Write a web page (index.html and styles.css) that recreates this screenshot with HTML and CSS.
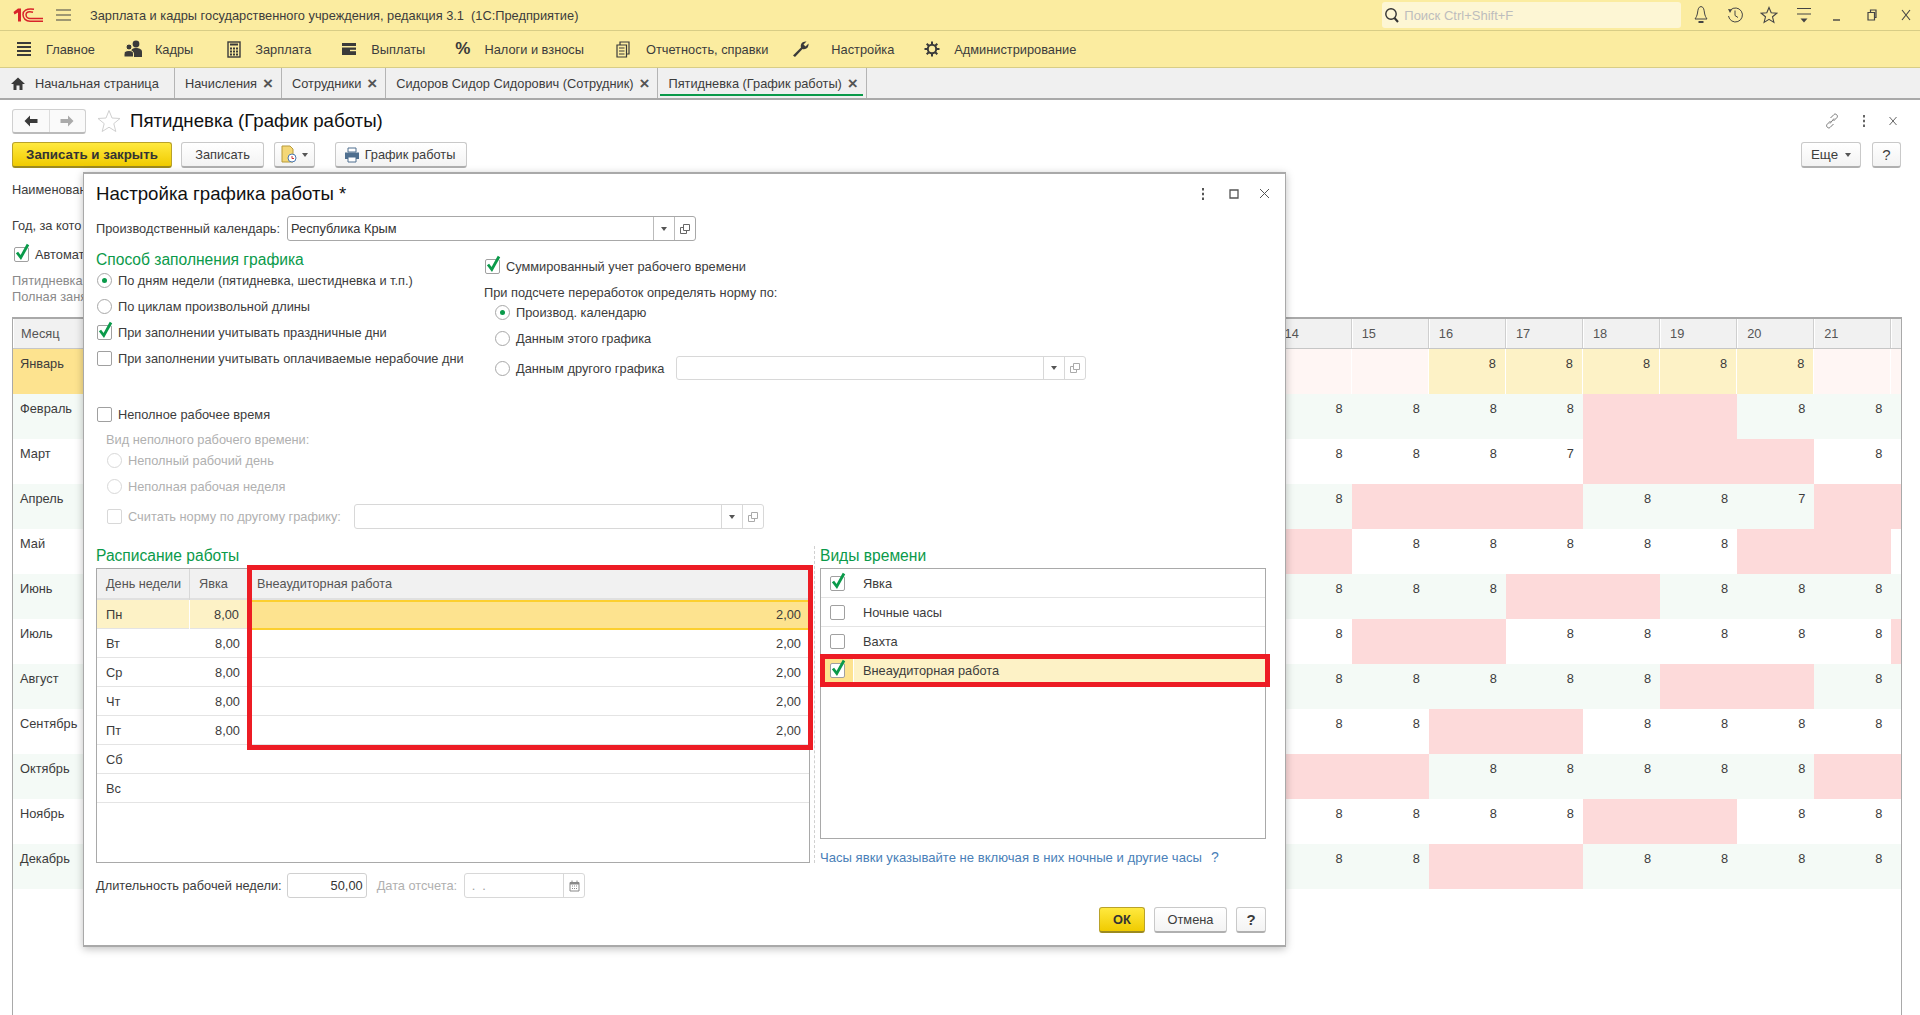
FILE: index.html
```html
<!DOCTYPE html>
<html lang="ru">
<head>
  <meta charset="UTF-8" />
  <title>Пятидневка (График работы)</title>
  <link rel="stylesheet" href="styles.css">
</head>
<body>

  <!-- shared icons -->
  <svg class="sprite" width="0" height="0">
    <symbol id="tick" viewBox="0 0 16 18"><path d="M3 9.5 L6.8 14.5 L14 1.5" fill="none" stroke="#0a9a4a" stroke-width="2.8"/></symbol>
    <symbol id="open" viewBox="0 0 12 12"><path d="M4.5 1.5h6v6h-6z M4.5 4.5h-3v6h6v-3" fill="none" stroke="currentColor"/></symbol>
  </svg>

  <header class="titlebar">
    <svg class="logo" width="30" height="14" viewBox="0 0 30 14">
      <path d="M0.500 4 L5 0.500 H8 V13.500 H5 V4.500 L1.500 6.500Z" fill="#d8232a"/>
      <path d="M21 1.200 C13 0 10 3 10 6.500 C10 10.500 13 13.200 17 13.200 H30" fill="none" stroke="#d8232a" stroke-width="1.500"/>
      <path d="M20 4.200 C16 3 13 4 13 6.500 C13 9 15 10.500 17 10.500 H30" fill="none" stroke="#d8232a" stroke-width="1.500"/>
    </svg>
    <svg class="burger" width="15" height="12" viewBox="0 0 15 12"><path d="M0 1h15M0 6h15M0 11h15" stroke="#444" stroke-width="1.2"/></svg>
    <div class="app-title">Зарплата и кадры государственного учреждения, редакция 3.1&nbsp; (1С:Предприятие)</div>
    <div class="search">
      <svg width="16" height="18" viewBox="0 0 16 18"><circle cx="7" cy="8" r="5.2" fill="none" stroke="#333" stroke-width="1.4"/><path d="M10.5 12 L14 16" stroke="#333" stroke-width="2"/></svg>
      <span>Поиск Ctrl+Shift+F</span>
    </div>
    <div class="win-icons">
      <svg width="16" height="20" viewBox="0 0 16 20"><path d="M8 1.5 C5 2 5 5 4.5 8 C4 11 3 12.5 2 14 H14 C13 12.5 12 11 11.5 8 C11 5 11 2 8 1.5Z" fill="none" stroke="#444"/><path d="M5.5 17h5" stroke="#444" stroke-width="2"/></svg>
      <svg width="18" height="18" viewBox="0 0 18 18"><path d="M4.5 4 A7 7 0 1 1 2.5 10" fill="none" stroke="#444"/><path d="M2 3 L6 3.5 L4 7Z" fill="#444"/><path d="M9 4.5 V9.5 L12 11.5" fill="none" stroke="#444"/></svg>
      <svg width="18" height="18" viewBox="0 0 18 18"><path d="M9 1.5 L11.2 6.8 L16.8 7.2 L12.5 10.8 L13.9 16.4 L9 13.4 L4.1 16.4 L5.5 10.8 L1.2 7.2 L6.8 6.8Z" fill="none" stroke="#444" stroke-width="1.1"/></svg>
      <svg width="14" height="16" viewBox="0 0 14 16"><path d="M0 1.5h14M0 7h14" stroke="#444" stroke-width="1.2"/><path d="M3.5 11.5h7L7 15.5Z" fill="#444"/></svg>
      <svg width="12" height="12" viewBox="0 0 12 12"><path d="M1 11h7" stroke="#444" stroke-width="1.4"/></svg>
      <svg width="12" height="12" viewBox="0 0 12 12"><path d="M2 3.5h6.5v7.5H2z M4.5 3.5V1h5.5v7.5H8.5" fill="none" stroke="#444" stroke-width="1.2"/></svg>
      <svg width="12" height="14" viewBox="0 0 12 14"><path d="M2 2 L10 12 M10 2 L2 12" stroke="#444" stroke-width="1.1"/></svg>
    </div>
  </header>

  <nav class="menubar">
    <div class="menu-item"><svg width="16" height="16" viewBox="0 0 16 16"><path d="M1 2h14M1 6h14M1 10h14M1 14h14" stroke="#3a3a3a" stroke-width="2"/></svg>Главное</div>
    <div class="menu-item"><svg width="20" height="18" viewBox="0 0 20 18"><circle cx="13" cy="4" r="3.4" fill="#3a3a3a"/><path d="M8 17 V12 C8 9 10 8 13 8 C16 8 19 9 19 12 V17Z" fill="#3a3a3a"/><circle cx="6" cy="7" r="3" fill="#3a3a3a" stroke="#fbeca0"/><path d="M1 17 V14 C1 11.500 3 10.500 6 10.500 C9 10.500 10.500 11.500 10.500 14 V17Z" fill="#3a3a3a" stroke="#fbeca0"/></svg>Кадры</div>
    <div class="menu-item"><svg width="14" height="17" viewBox="0 0 14 17"><rect x="1" y="1" width="12" height="15" fill="none" stroke="#3a3a3a" stroke-width="1.4"/><path d="M3 3.500h8" stroke="#3a3a3a" stroke-width="2"/><path d="M3 7.500h2M6 7.500h2M9 7.500h2M3 10.500h2M6 10.500h2M9 10.500h2M3 13.500h2M6 13.500h2M9 13.500h2" stroke="#3a3a3a" stroke-width="1.8"/></svg>Зарплата</div>
    <div class="menu-item"><svg width="16" height="14" viewBox="0 0 16 14"><path d="M1 1h14v3H1z" fill="#3a3a3a"/><path d="M1 5.500h14V13H1z" fill="#3a3a3a"/><path d="M9 8.500h6" stroke="#fbeca0" stroke-width="1.400"/></svg>Выплаты</div>
    <div class="menu-item"><span class="percent">%</span>Налоги и взносы</div>
    <div class="menu-item"><svg width="14" height="17" viewBox="0 0 14 17"><path d="M1 4h9.500v12H1z M4 4V1h9v12h-2.500" fill="none" stroke="#3a3a3a" stroke-width="1.200"/><path d="M3 7h5.500M3 10h5.500M3 13h5.500" stroke="#3a3a3a"/></svg>Отчетность, справки</div>
    <div class="menu-item"><svg width="18" height="18" viewBox="0 0 18 18"><path d="M1 15.500 L9 7.500 C8 4 10.500 1 14.500 1.500 L11.500 4.500 L13.500 6.500 L16.500 3.500 C17 7.500 14 10 10.500 9 L3 17Z" fill="#3a3a3a"/></svg>Настройка</div>
    <div class="menu-item"><svg width="16" height="16" viewBox="0 0 16 16"><circle cx="8" cy="8" r="4.200" fill="none" stroke="#3a3a3a" stroke-width="2"/><path d="M8 0.500v3M8 12.500v3M0.500 8h3M12.500 8h3M2.700 2.700l2.100 2.100M11.200 11.200l2.100 2.100M2.700 13.300l2.100-2.100M11.200 4.800l2.100-2.100" stroke="#3a3a3a" stroke-width="2"/></svg>Администрирование</div>
  </nav>

  <div class="tabbar">
    <div class="tab tab-home"><svg width="14" height="13" viewBox="0 0 14 13"><path d="M7 0.500 L14 7 H11.500 V13 H8.500 V8.500 H5.500 V13 H2.500 V7 H0Z" fill="#3a3a3a"/></svg>Начальная страница</div>
    <div class="tab">Начисления<span class="tab-x">×</span></div>
    <div class="tab">Сотрудники<span class="tab-x">×</span></div>
    <div class="tab">Сидоров Сидор Сидорович (Сотрудник)<span class="tab-x">×</span></div>
    <div class="tab tab-active">Пятидневка (График работы)<span class="tab-x">×</span></div>
  </div>

  <main class="form">
    <div class="form-head">
      <div class="nav-group">
        <span class="nav-btn"><svg width="14" height="12" viewBox="0 0 14 12"><path d="M0.500 6 L6 0.500 V4 H13.500 V8 H6 V11.500Z" fill="#3a3a3a"/></svg></span>
        <span class="nav-btn"><svg width="14" height="12" viewBox="0 0 14 12"><path d="M13.500 6 L8 0.500 V4 H0.500 V8 H8 V11.500Z" fill="#aaa"/></svg></span>
      </div>
      <svg class="fav" width="24" height="24" viewBox="0 0 24 24"><path d="M12 1.500 L15 9 L23 9.500 L16.800 14.600 L18.800 22.500 L12 18.200 L5.200 22.500 L7.200 14.600 L1 9.500 L9 9Z" fill="none" stroke="#d0d0d0"/></svg>
      <h1 class="form-title">Пятидневка (График работы)</h1>
      <div class="head-icons">
        <svg width="16" height="18" viewBox="0 0 16 18"><path d="M6.500 6 L10 2.500 C11.500 1 14.500 3.500 13 5.500 L9.500 9 M9.500 12 L6 15.500 C4.500 17 1.500 14.500 3 12.500 L6.500 9 M6 11.500 L10 6.500" fill="none" stroke="#777"/></svg>
        <svg width="4" height="14" viewBox="0 0 4 14"><path d="M2 1v2.500M2 5.700v2.500M2 10.500v2.500" stroke="#666" stroke-width="2"/></svg>
        <svg width="10" height="10" viewBox="0 0 10 10"><path d="M1.500 1 L8.500 9 M8.500 1 L1.500 9" stroke="#666"/></svg>
      </div>
    </div>

    <div class="form-bar">
      <button class="btn btn-default btn-save">Записать и закрыть</button>
      <button class="btn btn-write">Записать</button>
      <button class="btn btn-split">
        <svg width="16" height="19" viewBox="0 0 16 19"><path d="M1 1h8l3 3v13H1z" fill="#f4d777" stroke="#b79a3a"/><circle cx="11" cy="13" r="4" fill="#fff" stroke="#4a78b0"/><path d="M11 11v2.500h2" stroke="#c33" fill="none"/></svg>
        <i class="caret"></i>
      </button>
      <button class="btn btn-print">
        <svg width="16" height="16" viewBox="0 0 16 16"><path d="M4 1h8v4H4z" fill="#fff" stroke="#4f6f8f"/><path d="M1 5.500h14V12H1z" fill="#4f6f8f"/><path d="M4 10h8v5H4z" fill="#fff" stroke="#4f6f8f"/></svg>
        График работы
      </button>
      <div class="bar-right">
        <button class="btn btn-more">Еще<i class="caret"></i></button>
        <button class="btn btn-help">?</button>
      </div>
    </div>

    <div class="field f-name">Наименован</div>
    <div class="field f-year">Год, за кото</div>
    <div class="field f-auto"><span class="check is-on"><svg><use href="#tick"/></svg></span>Автомат</div>
    <div class="note">Пятидневка</div>
    <div class="note">Полная заня</div>

    <section class="calendar">
      <div class="cal-row cal-head"><div class="cell month">Месяц</div><div class="gap"></div><div class="cell">14</div><div class="cell">15</div><div class="cell">16</div><div class="cell">17</div><div class="cell">18</div><div class="cell">19</div><div class="cell">20</div><div class="cell">21</div><div class="cell">22</div></div>
      <div class="cal-row cal-sel"><div class="cell month">Январь</div><div class="gap"></div><div class="cell rest"></div><div class="cell rest"></div><div class="cell">8</div><div class="cell">8</div><div class="cell">8</div><div class="cell">8</div><div class="cell">8</div><div class="cell rest"></div><div class="cell rest"></div></div>
      <div class="cal-row even"><div class="cell month">Февраль</div><div class="gap"></div><div class="cell">8</div><div class="cell">8</div><div class="cell">8</div><div class="cell">8</div><div class="cell off"></div><div class="cell off"></div><div class="cell">8</div><div class="cell">8</div><div class="cell"></div></div>
      <div class="cal-row"><div class="cell month">Март</div><div class="gap"></div><div class="cell">8</div><div class="cell">8</div><div class="cell">8</div><div class="cell">7</div><div class="cell off"></div><div class="cell off"></div><div class="cell off"></div><div class="cell">8</div><div class="cell"></div></div>
      <div class="cal-row even"><div class="cell month">Апрель</div><div class="gap"></div><div class="cell">8</div><div class="cell off"></div><div class="cell off"></div><div class="cell off"></div><div class="cell">8</div><div class="cell">8</div><div class="cell">7</div><div class="cell off"></div><div class="cell off"></div></div>
      <div class="cal-row"><div class="cell month">Май</div><div class="gap"></div><div class="cell off"></div><div class="cell">8</div><div class="cell">8</div><div class="cell">8</div><div class="cell">8</div><div class="cell">8</div><div class="cell off"></div><div class="cell off"></div><div class="cell"></div></div>
      <div class="cal-row even"><div class="cell month">Июнь</div><div class="gap"></div><div class="cell">8</div><div class="cell">8</div><div class="cell">8</div><div class="cell off"></div><div class="cell off"></div><div class="cell">8</div><div class="cell">8</div><div class="cell">8</div><div class="cell"></div></div>
      <div class="cal-row"><div class="cell month">Июль</div><div class="gap"></div><div class="cell">8</div><div class="cell off"></div><div class="cell off"></div><div class="cell">8</div><div class="cell">8</div><div class="cell">8</div><div class="cell">8</div><div class="cell">8</div><div class="cell off"></div></div>
      <div class="cal-row even"><div class="cell month">Август</div><div class="gap"></div><div class="cell">8</div><div class="cell">8</div><div class="cell">8</div><div class="cell">8</div><div class="cell">8</div><div class="cell off"></div><div class="cell off"></div><div class="cell">8</div><div class="cell"></div></div>
      <div class="cal-row"><div class="cell month">Сентябрь</div><div class="gap"></div><div class="cell">8</div><div class="cell">8</div><div class="cell off"></div><div class="cell off"></div><div class="cell">8</div><div class="cell">8</div><div class="cell">8</div><div class="cell">8</div><div class="cell"></div></div>
      <div class="cal-row even"><div class="cell month">Октябрь</div><div class="gap"></div><div class="cell off"></div><div class="cell off"></div><div class="cell">8</div><div class="cell">8</div><div class="cell">8</div><div class="cell">8</div><div class="cell">8</div><div class="cell off"></div><div class="cell off"></div></div>
      <div class="cal-row"><div class="cell month">Ноябрь</div><div class="gap"></div><div class="cell">8</div><div class="cell">8</div><div class="cell">8</div><div class="cell">8</div><div class="cell off"></div><div class="cell off"></div><div class="cell">8</div><div class="cell">8</div><div class="cell"></div></div>
      <div class="cal-row even"><div class="cell month">Декабрь</div><div class="gap"></div><div class="cell">8</div><div class="cell">8</div><div class="cell off"></div><div class="cell off"></div><div class="cell">8</div><div class="cell">8</div><div class="cell">8</div><div class="cell">8</div><div class="cell"></div></div>
    </section>
  </main>

  <!-- Modal window -->
  <div class="dialog">
    <div class="dlg-head">
      <div class="dlg-title">Настройка графика работы *</div>
      <div class="dlg-icons">
        <svg width="4" height="14" viewBox="0 0 4 14"><path d="M2 1v2.500M2 5.700v2.500M2 10.500v2.500" stroke="#555" stroke-width="2"/></svg>
        <svg width="10" height="10" viewBox="0 0 10 10"><path d="M1 1h8v8H1z" fill="none" stroke="#555" stroke-width="1.300"/></svg>
        <svg width="11" height="11" viewBox="0 0 11 11"><path d="M1 1 L10 10 M10 1 L1 10" stroke="#555"/></svg>
      </div>
    </div>

    <div class="cal-field">
      <label>Производственный календарь:</label>
      <div class="input input-cal"><span class="input-text">Республика Крым</span><span class="input-btn"><i class="caret"></i></span><span class="input-btn"><svg width="12" height="12"><use href="#open"/></svg></span></div>
    </div>

    <div class="fill-block">
      <div class="fill-left">
        <h2 class="group-title">Способ заполнения графика</h2>
        <div class="opt"><span class="radio is-on"></span>По дням недели (пятидневка, шестидневка и т.п.)</div>
        <div class="opt"><span class="radio"></span>По циклам произвольной длины</div>
        <div class="opt"><span class="check is-on"><svg><use href="#tick"/></svg></span>При заполнении учитывать праздничные дни</div>
        <div class="opt"><span class="check"></span>При заполнении учитывать оплачиваемые нерабочие дни</div>
      </div>
      <div class="fill-right">
        <div class="opt"><span class="check is-on"><svg><use href="#tick"/></svg></span>Суммированный учет рабочего времени</div>
        <div class="norm-label">При подсчете переработок определять норму по:</div>
        <div class="opt opt-norm1"><span class="radio is-on"></span>Производ. календарю</div>
        <div class="opt opt-norm2"><span class="radio"></span>Данным этого графика</div>
        <div class="opt opt-norm3"><span class="radio"></span>Данным другого графика
          <div class="input input-other is-dim"><span class="input-text"></span><span class="input-btn"><i class="caret"></i></span><span class="input-btn"><svg width="12" height="12"><use href="#open"/></svg></span></div>
        </div>
      </div>
    </div>

    <div class="part-block">
      <div class="opt"><span class="check"></span>Неполное рабочее время</div>
      <div class="part-sub">
        <div class="part-label">Вид неполного рабочего времени:</div>
        <div class="opt opt-part1"><span class="radio"></span>Неполный рабочий день</div>
        <div class="opt opt-part2"><span class="radio"></span>Неполная рабочая неделя</div>
        <div class="opt opt-part3"><span class="check"></span>Считать норму по другому графику:
          <div class="input input-norm is-dim"><span class="input-text"></span><span class="input-btn"><i class="caret"></i></span><span class="input-btn"><svg width="12" height="12"><use href="#open"/></svg></span></div>
        </div>
      </div>
    </div>

    <div class="tables">
      <div class="sched">
        <h2 class="group-title">Расписание работы</h2>
        <div class="sched-table">
          <div class="sched-row sched-head"><div>День недели</div><div>Явка</div><div>Внеаудиторная работа</div></div>
          <div class="sched-row is-sel"><div>Пн</div><div class="num">8,00</div><div class="num">2,00</div></div>
          <div class="sched-row"><div>Вт</div><div class="num">8,00</div><div class="num">2,00</div></div>
          <div class="sched-row"><div>Ср</div><div class="num">8,00</div><div class="num">2,00</div></div>
          <div class="sched-row"><div>Чт</div><div class="num">8,00</div><div class="num">2,00</div></div>
          <div class="sched-row"><div>Пт</div><div class="num">8,00</div><div class="num">2,00</div></div>
          <div class="sched-row"><div>Сб</div><div class="num"></div><div class="num"></div></div>
          <div class="sched-row"><div>Вс</div><div class="num"></div><div class="num"></div></div>
        </div>
        <div class="red-box red-sched"></div>
      </div>
      <div class="kinds">
        <h2 class="group-title">Виды времени</h2>
        <div class="kinds-table">
          <div class="kind-row"><div class="kind-check"><span class="check is-on"><svg><use href="#tick"/></svg></span></div><div>Явка</div></div>
          <div class="kind-row"><div class="kind-check"><span class="check"></span></div><div>Ночные часы</div></div>
          <div class="kind-row"><div class="kind-check"><span class="check"></span></div><div>Вахта</div></div>
          <div class="kind-row is-sel"><div class="kind-check"><span class="check is-on"><svg><use href="#tick"/></svg></span></div><div>Внеаудиторная работа</div></div>
        </div>
        <div class="red-box red-kinds"></div>
        <div class="kinds-hint">Часы явки указывайте не включая в них ночные и другие часы<span class="hint-q">?</span></div>
      </div>
    </div>

    <div class="week-row">
      <label>Длительность рабочей недели:</label>
      <div class="input input-week"><span class="input-text num">50,00</span></div>
      <label class="is-off">Дата отсчета:</label>
      <div class="input input-date is-dim"><span class="input-text">&nbsp;. &nbsp;.</span><span class="input-btn"><svg width="11" height="12" viewBox="0 0 11 12"><path d="M1 2.500h9V11H1z" fill="none" stroke="#888"/><path d="M1 3.500h9" stroke="#888" stroke-width="2"/><path d="M3 0.500v2M8 0.500v2M3 6h1M5 6h1M7 6h1M3 8.500h1M5 8.500h1M7 8.500h1" stroke="#888"/></svg></span></div>
    </div>

    <div class="dlg-buttons">
      <button class="btn btn-default btn-ok">ОК</button>
      <button class="btn btn-cancel">Отмена</button>
      <button class="btn btn-help">?</button>
    </div>
  </div>

</body>
</html>
```

FILE: styles.css
```css
:root {
  --yellow: #fbeca0;
  --yellow-line: #d8cd86;
  --sel-light: #fdf2c6;
  --sel-strong: #fde38f;
  --sel-line: #fccf2e;
  --green-title: #0a9a4a;
  --line: #a9a9a9;
  --row-line: #e4e4e4;
  --text: #3c3c3c;
}

* {
  box-sizing: border-box;
}

html, body {
  height: 100%;
}

body {
  margin: 0;
  position: relative;
  overflow: hidden;
  background: #fff;
  color: var(--text);
  font-family: "Liberation Sans", Arial, sans-serif;
  font-size: 12.8px;
}

.sprite {
  position: absolute;
}

svg {
  display: block;
  flex: none;
}

/* top bars */
.titlebar {
  height: 31px;
  display: flex;
  align-items: center;
  padding-left: 13px;
  background: var(--yellow);
  border-bottom: 1px solid var(--yellow-line);
}

.burger {
  margin-left: 13px;
}

.app-title {
  margin-left: 19px;
  width: 1273px;
}

.search {
  width: 299px;
  height: 26px;
  margin-left: 20.500px;
  display: flex;
  align-items: center;
  gap: 4px;
  padding-left: 2px;
  background: #fdf6d4;
  border-radius: 3px;
  color: #bdbdbd;
  font-size: 13px;
}

.win-icons {
  width: 239px;
  display: grid;
  grid-template-columns: repeat(7, 34.200px);
  justify-items: center;
  align-items: center;
  padding-left: 3px;
}

.menubar {
  height: 37px;
  display: flex;
  align-items: center;
  padding-left: 16px;
  gap: 30px;
  background: var(--yellow);
  border-bottom: 1px solid var(--yellow-line);
}

.menu-item {
  display: flex;
  align-items: center;
  gap: 14px;
}

.menu-item:nth-child(2) {
  margin-left: -2px;
  gap: 12px;
}

.menu-item:nth-child(3) {
  margin-left: 4px;
}

.menu-item:nth-child(6) {
  margin-left: 2px;
  gap: 16px;
}

.menu-item:nth-child(7) {
  margin-left: -6px;
  gap: 21px;
}

.percent {
  font-size: 17px;
  font-weight: bold;
  color: #3a3a3a;
}

.tabbar {
  height: 32px;
  display: flex;
  background: #f0f0f0;
  border-bottom: 2px solid var(--line);
}

.tab {
  position: relative;
  display: flex;
  align-items: center;
  gap: 6px;
  padding: 0 8px 0 10px;
  border-right: 1px solid #b4b4b4;
}

.tab-home {
  width: 175px;
  gap: 10px;
  padding-left: 11px;
}

.tab-x {
  font-size: 17px;
  font-weight: bold;
  color: #555;
  line-height: 1;
}

.tab-active::after {
  content: "";
  position: absolute;
  left: 2px;
  right: 3px;
  bottom: 2px;
  height: 2px;
  background: #0a9a4a;
}

/* form behind the dialog */
.form {
  padding: 0 19px 0 12px;
}

.form-head {
  height: 42px;
  display: flex;
  align-items: center;
}

.nav-group {
  width: 74px;
  height: 25px;
  display: flex;
  border: 1px solid #d0d0d0;
  border-bottom: 2px solid #bbb;
  border-radius: 3px;
  background: #fafafa;
}

.nav-btn {
  flex: 1;
  display: flex;
  align-items: center;
  justify-content: center;
}

.nav-btn + .nav-btn {
  border-left: 1px solid #ddd;
}

.fav {
  margin-left: 11px;
}

.form-title {
  margin: 0 0 0 9px;
  font-size: 18.67px;
  font-weight: normal;
  color: #111;
}

.head-icons {
  margin-left: auto;
  display: flex;
  align-items: center;
  gap: 22px;
  padding-right: 3px;
}

.form-bar {
  height: 26px;
  display: flex;
}

.btn {
  height: 26px;
  padding: 0;
  display: flex;
  align-items: center;
  justify-content: center;
  gap: 5px;
  font: inherit;
  color: var(--text);
  background: linear-gradient(#fff, #f3f3f3);
  border: 1px solid #c9c9c9;
  border-bottom: 2px solid #b0b0b0;
  border-radius: 3px;
}

.btn-default {
  background: linear-gradient(#ffe93f, #f0cb00);
  border-color: #b9a22a;
  border-bottom-color: #9c8a20;
  color: #333;
}

.btn-save {
  width: 160px;
  font-weight: bold;
  font-size: 13.300px;
}

.btn-write {
  width: 83px;
  margin-left: 9px;
}

.btn-split {
  width: 41px;
  margin-left: 10px;
}

.btn-print {
  width: 132px;
  margin-left: 20px;
  padding-right: 3px;
}

.bar-right {
  margin-left: auto;
  display: flex;
  gap: 11px;
}

.btn-more {
  width: 60px;
  font-size: 13.300px;
  gap: 7px;
}

.btn-help {
  width: 29px;
  font-size: 15px;
}

.caret {
  display: block;
  width: 0;
  height: 0;
  border: 3px solid transparent;
  border-top: 4px solid #555;
  border-bottom: 0;
}

.field {
  display: flex;
  align-items: center;
  gap: 6px;
  height: 20px;
}

.f-name {
  margin-top: 11px;
}

.f-year {
  margin-top: 16px;
}

.f-auto {
  margin-top: 9px;
  padding-left: 2px;
}

.note {
  height: 16px;
  line-height: 16px;
  color: #8a8a8a;
}

.f-auto + .note {
  margin-top: 9px;
}

.calendar {
  position: absolute;
  left: 12px;
  top: 317px;
  width: 1890px;
  height: 698px;
  overflow: hidden;
  border: 1px solid var(--line);
  border-bottom: 0;
  border-top-width: 2px;
}

.cal-row {
  height: 45px;
  display: grid;
  grid-template-columns: 259px 1002.600px repeat(9, 77.100px);
}

.cell {
  padding: 7px 9px 0;
  text-align: right;
}

.month {
  text-align: left;
  padding-left: 7px;
}

.cal-head {
  height: 30px;
  background: #f1f1f1;
  border-bottom: 1px solid #c6c6c6;
}

.cal-head .cell {
  padding-top: 7px;
  text-align: left;
  color: #555;
  border-right: 1px solid #cfcfcf;
  border-left: 1px solid #fff;
}

.even {
  background: #f4faf6;
}

.cal-sel .cell {
  background: var(--sel-light);
  border-right: 1px solid #fff;
}

.cal-sel .month {
  background: var(--sel-strong);
}

.cal-sel .rest {
  background: #fff6f4;
}

.off {
  background: #fddada;
}

/* dialog */
.dialog {
  position: absolute;
  left: 83px;
  top: 172px;
  width: 1203px;
  height: 775px;
  padding: 0 19px 0 12px;
  background: #fff;
  border: 1px solid var(--line);
  border-top-width: 2px;
  border-bottom-width: 2px;
  box-shadow: 0 2px 8px rgba(0, 0, 0, 0.25);
}

.dlg-head {
  height: 42px;
  display: flex;
  align-items: center;
  justify-content: space-between;
  padding-bottom: 3px;
}

.dlg-title {
  font-size: 18.67px;
  color: #111;
}

.dlg-icons {
  display: grid;
  grid-template-columns: repeat(3, 31px);
  justify-items: center;
  align-items: center;
  margin-right: -14px;
}

.cal-field {
  display: flex;
  align-items: center;
  gap: 7px;
}

.input {
  height: 25px;
  display: flex;
  background: #fff;
  border: 1px solid #a8a8a8;
  border-radius: 3px;
  color: #333;
}

.is-dim {
  border-color: #d8d8d8;
  color: #a0a0a0;
}

.input-text {
  flex: 1;
  padding: 0 3px;
  line-height: 23px;
}

.input-btn {
  width: 21px;
  display: flex;
  align-items: center;
  justify-content: center;
  border-left: 1px solid #bbb;
  color: #666;
}

.is-dim .input-btn {
  border-left-color: #d8d8d8;
  color: #aaa;
}

.input-cal {
  width: 409px;
}

.fill-block {
  display: flex;
  margin-top: 9px;
  height: 131px;
}

.fill-left {
  width: 388px;
}

.fill-right {
  padding-top: 3px;
}

.group-title {
  margin: 0;
  height: 17px;
  font-size: 15.600px;
  line-height: 20px;
  font-weight: normal;
  color: var(--green-title);
}

.opt {
  height: 26px;
  display: flex;
  align-items: center;
  gap: 6px;
  padding-left: 1px;
  white-space: nowrap;
}

.radio {
  width: 15px;
  height: 15px;
  flex: none;
  position: relative;
  background: #fff;
  border: 1px solid #a8a8a8;
  border-radius: 50%;
}

.radio.is-on::after {
  content: "";
  position: absolute;
  left: 4px;
  top: 4px;
  width: 5px;
  height: 5px;
  border-radius: 50%;
  background: #0a9a4a;
}

.check {
  width: 15px;
  height: 15px;
  flex: none;
  position: relative;
  background: #fff;
  border: 1px solid #a0a0a0;
  border-radius: 2px;
}

.check svg {
  position: absolute;
  left: -1px;
  top: -5px;
  width: 16px;
  height: 18px;
}

.norm-label {
  height: 18px;
  margin-top: 5px;
  line-height: 18px;
}

.opt-norm1 {
  height: 20px;
  padding-left: 11px;
}

.opt-norm2 {
  margin-top: 3px;
  padding-left: 11px;
}

.opt-norm3 {
  height: 24px;
  margin-top: 5px;
  padding-left: 11px;
}

.input-other {
  width: 410px;
  height: 24px;
  margin-left: 6px;
}

.part-block {
  margin-top: 20px;
}

.part-sub {
  padding-left: 10px;
  color: #b0b0b0;
}

.part-sub .radio,
.part-sub .check {
  border-color: #d8d8d8;
}

.part-label {
  height: 20px;
  margin-top: 3px;
  line-height: 20px;
}

.opt-part1 {
  height: 20px;
}

.opt-part2 {
  margin-top: 3px;
}

.opt-part3 {
  height: 25px;
  margin-top: 5px;
}

.input-norm {
  width: 410px;
  margin-left: 7px;
}

.tables {
  display: flex;
  height: 317px;
  margin-top: 17px;
}

.sched {
  position: relative;
  flex: none;
  width: 714px;
}

.sched .group-title,
.kinds .group-title {
  height: 22px;
}

.sched-table {
  height: 295px;
  border: 1px solid var(--line);
}

.sched-row {
  height: 29px;
  display: grid;
  grid-template-columns: 93px 58px 1fr;
  border-bottom: 1px solid var(--row-line);
  line-height: 30px;
}

.sched-row > div {
  padding: 0 9px;
  white-space: nowrap;
}

.sched-row .num {
  text-align: right;
  padding-right: 8px;
}

.sched-head {
  height: 31px;
  background: #f1f1f1;
  color: #555;
  border-bottom: 2px solid #e0e0e0;
  line-height: 31px;
  font-size: 12.700px;
}

.sched-head > div {
  padding-right: 0;
  border-right: 1px solid #d8d8d8;
}

.sched-row.is-sel {
  background: var(--sel-light);
}

.sched-row.is-sel > div:last-child {
  background: var(--sel-strong);
  border-top: 2px solid var(--sel-line);
  border-bottom: 2px solid var(--sel-line);
  line-height: 26px;
}

.sched-row.is-sel > div:nth-child(1),
.sched-row.is-sel > div:nth-child(2) {
  border-right: 1px solid #fff;
}

.red-box {
  position: absolute;
  border: 5px solid #ed1c24;
}

.red-sched {
  left: 151px;
  top: 19px;
  width: 566px;
  height: 185px;
}

.kinds {
  position: relative;
  flex: none;
  width: 446px;
  margin-left: 10px;
}

.kinds::before {
  content: "";
  position: absolute;
  left: -6px;
  top: 0;
  bottom: 0;
  border-left: 1px dashed #d0d0d0;
}

.kinds-table {
  height: 271px;
  border: 1px solid var(--line);
}

.kind-row {
  height: 29px;
  display: grid;
  grid-template-columns: 33px 1fr;
  align-items: center;
  border-bottom: 1px solid var(--row-line);
}

.kind-row > div:last-child {
  padding-left: 9px;
  line-height: 29px;
}

.kind-check {
  display: flex;
  justify-content: center;
  height: 100%;
  align-items: center;
}

.kind-row.is-sel {
  background: var(--sel-light);
  border-bottom: 0;
}

.kind-row.is-sel .kind-check {
  background: var(--sel-strong);
  border-right: 1px solid #fff;
}

.red-kinds {
  left: 0;
  top: 108px;
  width: 450px;
  height: 33px;
}

.kinds-hint {
  height: 20px;
  margin-top: 8px;
  line-height: 20px;
  color: #4a7fb8;
  font-size: 13.100px;
}

.hint-q {
  margin-left: 9px;
  font-size: 14px;
}

.week-row {
  display: flex;
  align-items: center;
  margin-top: 10px;
}

.input-week {
  width: 80px;
  margin-left: 5px;
  border-color: #d0d0d0;
}

.input-week .num {
  text-align: right;
}

.is-off {
  margin-left: 10px;
  color: #b0b0b0;
}

.input-date {
  width: 121px;
  margin-left: 7px;
}

.dlg-buttons {
  display: flex;
  justify-content: flex-end;
  gap: 9px;
  margin-top: 9px;
}

.btn-ok {
  width: 46px;
  font-weight: bold;
}

.btn-cancel {
  width: 73px;
}

.dlg-buttons .btn-help {
  width: 30px;
  font-weight: bold;
}
```
